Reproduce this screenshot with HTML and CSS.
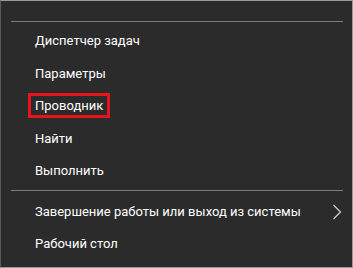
FILE: index.html
```html
<!DOCTYPE html>
<html lang="ru">
<head>
  <meta charset="UTF-8" />
  <meta name="viewport" content="width=device-width, initial-scale=1.0" />
  <title>Контекстное меню</title>
  <link rel="stylesheet" href="styles.css">
</head>
<body>
  <div class="menu">
    <div class="sep"></div>
    <ul class="group">
      <li class="item">Диспетчер задач</li>
      <li class="item">Параметры</li>
      <li class="item marked">Проводник</li>
      <li class="item">Найти</li>
      <li class="item">Выполнить</li>
    </ul>
    <div class="sep"></div>
    <ul class="group last">
      <li class="item sub">
        <span>Завершение работы или выход из системы</span>
        <svg class="chevron" width="10" height="16" viewBox="0 0 10 16">
          <path d="M1.5 1 L8.5 8 L1.5 15" fill="none" stroke="#d8d8d8" stroke-width="1.1"/>
        </svg>
      </li>
      <li class="item">Рабочий стол</li>
    </ul>
  </div>
</body>
</html>
```

FILE: styles.css
```css
html, body {
  margin: 0;
  padding: 0;
  background: #2b2b2b;
}
.menu {
  box-sizing: border-box;
  width: 353px;
  height: 268px;
  background: #2b2b2b;
  border: 1px solid #9a9a9a;
  border-left-color: #5a5a5a;
  padding-top: 20px;
  font-family: Roboto, "Noto Sans", sans-serif;
  font-size: 13px;
  color: #ffffff;
}
.sep {
  height: 1px;
  margin: 0 9px 0 10px;
  background: #7e7e7e;
}
.group {
  list-style: none;
  margin: 3px 0 2.5px;
  padding: 0;
}
.group.last {
  margin-top: 4px;
}
.item {
  position: relative;
  height: 32.5px;
  line-height: 32px;
  padding-left: 34px;
  white-space: nowrap;
}
.item.sub {
  display: flex;
  align-items: center;
  justify-content: space-between;
  padding-right: 10px;
  height: 33px;
}
.chevron {
  display: block;
  margin-top: 1px;
}
.marked::after {
  content: "";
  position: absolute;
  left: 27px;
  top: 3px;
  width: 76px;
  height: 19px;
  border: 3px solid #e8141c;
}
```
